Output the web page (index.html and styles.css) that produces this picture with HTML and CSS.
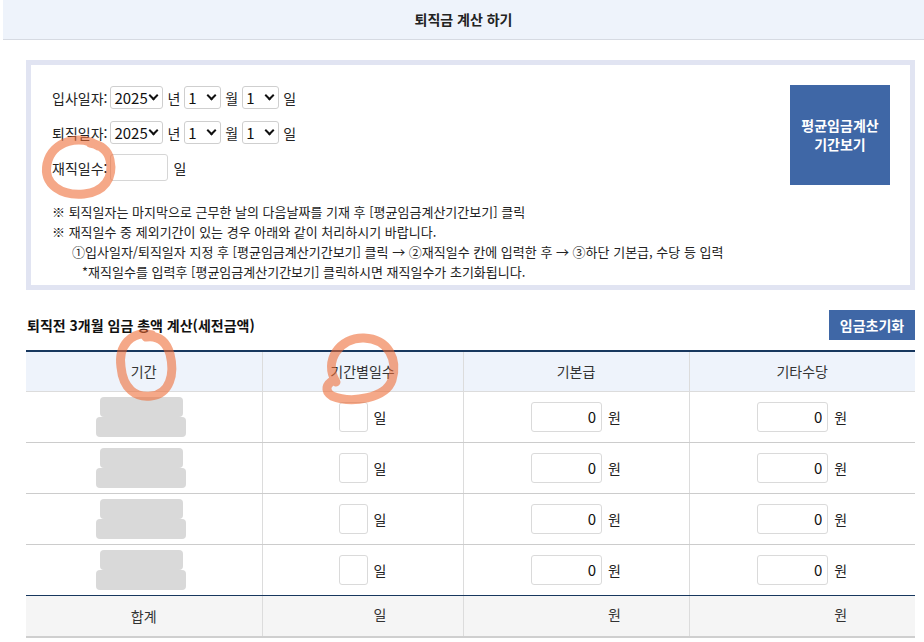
FILE: index.html
```html
<!DOCTYPE html>
<html lang="ko">
<head>
    <meta charset="UTF-8">
    <meta name="viewport" content="width=device-width, initial-scale=1.0">
    <title>퇴직금 계산 하기</title>
    <link rel="stylesheet" href="styles.css">
</head>
<body>
    <div class="page-title">퇴직금 계산 하기</div>

    <div class="calc-wrap">
        <div class="date-box">
            <div class="date-fields">
                <div class="field-row">
                    <span class="field-label">입사일자:</span>
                    <span class="select-wrap year"><select><option>2025</option></select></span>
                    <span>년</span>
                    <span class="select-wrap"><select><option>1</option></select></span>
                    <span>월</span>
                    <span class="select-wrap"><select><option>1</option></select></span>
                    <span>일</span>
                </div>
                <div class="field-row">
                    <span class="field-label">퇴직일자:</span>
                    <span class="select-wrap year"><select><option>2025</option></select></span>
                    <span>년</span>
                    <span class="select-wrap"><select><option>1</option></select></span>
                    <span>월</span>
                    <span class="select-wrap"><select><option>1</option></select></span>
                    <span>일</span>
                </div>
                <div class="field-row">
                    <span class="field-label">재직일수:</span>
                    <input type="text" class="days-input">
                    <span class="unit-gap">일</span>
                </div>
                <div class="notes">
                    <p>※ 퇴직일자는 마지막으로 근무한 날의 다음날짜를 기재 후 [평균임금계산기간보기] 클릭</p>
                    <p>※ 재직일수 중 제외기간이 있는 경우 아래와 같이 처리하시기 바랍니다.</p>
                    <p class="step">①입사일자/퇴직일자 지정 후 [평균임금계산기간보기] 클릭 → ②재직일수 칸에 입력한 후 → ③하단 기본급, 수당 등 입력</p>
                    <p class="warn">*재직일수를 입력후 [평균임금계산기간보기] 클릭하시면 재직일수가 초기화됩니다.</p>
                </div>
            </div>
            <button class="period-button">평균임금계산<br>기간보기</button>
        </div>

        <div class="section-head">
            <h2>퇴직전 3개월 임금 총액 계산(세전금액)</h2>
            <button class="reset-button">임금초기화</button>
        </div>

        <table class="wage-table">
            <thead>
                <tr>
                    <th>기간</th>
                    <th>기간별일수</th>
                    <th>기본급</th>
                    <th>기타수당</th>
                </tr>
            </thead>
            <tbody id="wageRows"></tbody>
            <tfoot>
                <tr>
                    <td>합계</td>
                    <td><span class="cell-group"><span class="total-days"></span><span>일</span></span></td>
                    <td><span class="cell-group"><span class="total-money"></span><span>원</span></span></td>
                    <td><span class="cell-group"><span class="total-money"></span><span>원</span></span></td>
                </tr>
            </tfoot>
        </table>
    </div>

    <!-- marker circles drawn over the screenshot -->
    <svg class="marks" width="924" height="642" viewBox="0 0 924 642">
        <path d="M98 146 C82 134 52 140 47 164 C43 185 62 196 84 194 C104 192 114 178 110 160 C108 150 101 145 90 143"/>
        <path d="M152 335 C131 330 118 346 121 367 C123 389 136 398 151 396 C170 394 175 374 170 354 C166 341 158 335 146 337"/>
        <path d="M336 382 C323 361 340 337 364 338 C389 339 398 360 392 380 C386 398 352 404 332 396 C324 391 326 384 334 380"/>
    </svg>

    <script>
    document.addEventListener('DOMContentLoaded', function() {
        const tbody = document.getElementById('wageRows');
        for (let i = 0; i < 4; i++) {
            const tr = document.createElement('tr');
            tr.innerHTML = `
                <td><div class="period-blur"><span class="blur-top"></span><span class="blur-bottom"></span></div></td>
                <td><span class="cell-group"><input type="text" class="day-input"><span>일</span></span></td>
                <td><span class="cell-group"><input type="text" class="money-input" value="0"><span>원</span></span></td>
                <td><span class="cell-group"><input type="text" class="money-input" value="0"><span>원</span></span></td>
            `;
            tbody.appendChild(tr);
        }
    });
    </script>
</body>
</html>
```

FILE: styles.css
```css
* {
    margin: 0;
    padding: 0;
    box-sizing: border-box;
    font-family: 'Noto Sans CJK KR', 'Liberation Sans', sans-serif;
}
body {
    background-color: #fff;
    color: #222;
    font-size: 14px;
    width: 924px;
    height: 642px;
    overflow: hidden;
    position: relative;
}
.page-title {
    margin-left: 3px;
    height: 40px;
    line-height: 39px;
    background-color: #eef3fb;
    border-bottom: 1px solid #d6dae2;
    text-align: center;
    font-weight: bold;
    font-size: 14px;
    color: #222;
}
.calc-wrap {
    margin: 20px 9px 0 26px;
}
.date-box {
    display: flex;
    justify-content: space-between;
    align-items: flex-start;
    border: 5px solid #e1e4f2;
    padding: 15px 20px 3px 21px;
    height: 230px;
}
.field-row {
    display: flex;
    align-items: center;
    gap: 4px;
    height: 35px;
}
.field-label {
    margin-right: -1px;
}
.select-wrap {
    position: relative;
    display: inline-block;
}
.select-wrap select {
    appearance: none;
    -webkit-appearance: none;
    width: 37px;
    height: 23px;
    padding: 0 0 0 3px;
    border: 1px solid #cfcfcf;
    border-radius: 3px;
    background-color: #fff;
    font-size: 15px;
    line-height: 21px;
    color: #111;
}
.select-wrap.year select {
    width: 53px;
}
.select-wrap::after {
    content: '';
    position: absolute;
    right: 6px;
    top: 6px;
    width: 5px;
    height: 5px;
    border-right: 2px solid #111;
    border-bottom: 2px solid #111;
    transform: rotate(45deg);
    pointer-events: none;
}
.days-input {
    width: 58px;
    height: 27px;
    border: 1px solid #d6d6d6;
    border-radius: 3px;
}
.unit-gap {
    margin-left: 1px;
}
.notes {
    margin-top: 17px;
    font-size: 13px;
    line-height: 20px;
    color: #222;
}
.notes .step {
    padding-left: 20px;
}
.notes .warn {
    padding-left: 30px;
}
.period-button {
    margin-top: 5px;
    width: 100px;
    height: 100px;
    border: none;
    background-color: #3f67a6;
    color: #fff;
    font-weight: bold;
    font-size: 14px;
    line-height: 19px;
    cursor: pointer;
}
.section-head {
    display: flex;
    justify-content: space-between;
    align-items: center;
    margin-top: 20px;
    height: 30px;
}
.section-head h2 {
    font-size: 14px;
    font-weight: bold;
    color: #111;
    padding-left: 1px;
}
.reset-button {
    width: 86px;
    height: 30px;
    border: none;
    background-color: #3f67a6;
    color: #fff;
    font-weight: bold;
    font-size: 14px;
    cursor: pointer;
}
.wage-table {
    margin-top: 10px;
    width: 889px;
    border-collapse: collapse;
    table-layout: fixed;
    border-top: 2px solid #17375e;
}
.wage-table th:nth-child(1) { width: 236px; }
.wage-table th:nth-child(2) { width: 201px; }
.wage-table th:nth-child(3) { width: 226px; }
.wage-table th:nth-child(4) { width: 226px; }
.wage-table th {
    height: 40px;
    background-color: #eef3fb;
    font-weight: normal;
    font-size: 14px;
    color: #333;
    border-bottom: 1px solid #dcdcdc;
    border-left: 1px solid #dcdcdc;
}
.wage-table td {
    height: 51px;
    text-align: center;
    border-bottom: 1px solid #cccccc;
    border-left: 1px solid #dcdcdc;
}
.wage-table th:first-child,
.wage-table td:first-child {
    border-left: none;
}
.wage-table tbody tr:last-child td {
    border-bottom: 1px solid #17375e;
}
.wage-table tfoot td {
    height: 42px;
    background-color: #f5f5f5;
    color: #333;
    border-bottom: 2px solid #cfcfcf;
}
.cell-group {
    display: inline-flex;
    align-items: center;
    gap: 6px;
}
.day-input,
.total-days {
    width: 29px;
    height: 30px;
    border: 1px solid #dadada;
    border-radius: 3px;
}
.money-input,
.total-money {
    width: 71px;
    height: 30px;
    border: 1px solid #dadada;
    border-radius: 3px;
    text-align: right;
    padding-right: 5px;
    font-size: 15px;
    color: #111;
}
.total-days,
.total-money {
    border-color: transparent;
}
.period-blur {
    display: flex;
    flex-direction: column;
    align-items: center;
    margin-left: -5px;
}
.period-blur span {
    display: block;
    height: 20px;
    background-color: #d9d9d9;
    border-radius: 4px;
}
.period-blur .blur-top {
    width: 83px;
}
.period-blur .blur-bottom {
    width: 90px;
}
.marks {
    position: absolute;
    top: 0;
    left: 0;
    pointer-events: none;
}
.marks path {
    fill: none;
    stroke: rgba(238, 105, 50, 0.58);
    stroke-width: 9;
    stroke-linecap: round;
    stroke-linejoin: round;
}
```
